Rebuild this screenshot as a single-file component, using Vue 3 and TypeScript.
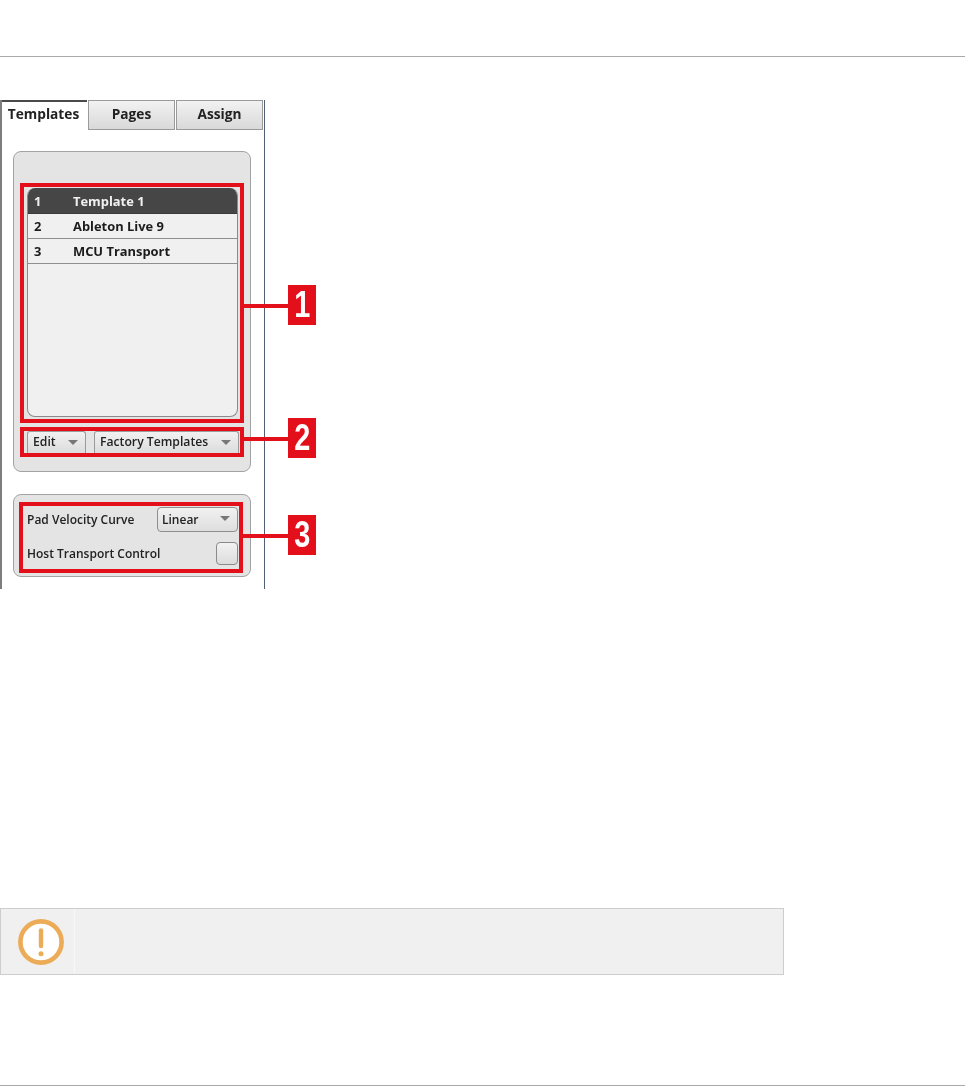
<script setup lang="ts">
const rows = [
  { n: '1', name: 'Template 1', on: true },
  { n: '2', name: 'Ableton Live 9', on: false },
  { n: '3', name: 'MCU Transport', on: false },
];
const tabs = ['Pages', 'Assign'];
</script>

<template>
  <div class="page">
    <header class="top-rule"></header>

    <section class="panel">
      <nav class="tabs">
        <div class="tab active">Templates</div>
        <div v-for="t in tabs" :key="t" class="tab">{{ t }}</div>
      </nav>

      <div class="group first">
        <div class="mark list-mark">
          <div class="list">
            <div v-for="r in rows" :key="r.n" class="row" :class="{ on: r.on }">
              <span class="num">{{ r.n }}</span>
              <span>{{ r.name }}</span>
            </div>
          </div>
        </div>
        <div class="mark buttons-mark">
          <div class="drop edit">Edit<i class="caret"></i></div>
          <div class="drop factory">Factory Templates<i class="caret"></i></div>
        </div>
      </div>

      <div class="group second">
        <div class="mark settings-mark">
          <div class="setting">
            <span>Pad Velocity Curve</span>
            <div class="select">Linear<i class="caret"></i></div>
          </div>
          <div class="setting">
            <span>Host Transport Control</span>
            <div class="check"></div>
          </div>
        </div>
      </div>

      <div class="callout c1"><div class="badge"><span class="digit">1</span></div></div>
      <div class="callout c2"><div class="badge"><span class="digit">2</span></div></div>
      <div class="callout c3"><div class="badge"><span class="digit">3</span></div></div>
    </section>

    <aside class="notice">
      <div class="notice-icon">
        <svg width="48" height="48" viewBox="0 0 48 48">
          <circle cx="24" cy="24" r="20.6" fill="#fff" stroke="#ecab56" stroke-width="4.6" />
          <path d="M24 12.5V28" stroke="#ecab56" stroke-width="4.4" stroke-linecap="round" fill="none" />
          <circle cx="24" cy="35.8" r="2.5" fill="#ecab56" />
        </svg>
      </div>
    </aside>

    <footer class="bottom-rule"></footer>
  </div>
</template>

<style>
html, body { margin: 0; background: #fff; }
</style>

<style scoped>
.page {
  position: relative;
  width: 965px;
  height: 1086px;
  overflow: hidden;
  background: #fff;
  font-family: "Open Sans", "Noto Sans", sans-serif;
  font-weight: 600;
  font-size: 12px;
  color: #222;
}
.top-rule {
  height: 56px;
  border-bottom: 1px solid #a9a9a9;
}
.panel {
  position: relative;
  box-sizing: border-box;
  width: 265px;
  height: 489px;
  margin-top: 43px;
  border-left: 2px solid #7d7d7d;
  border-right: 1px solid #4f5f75;
  filter: blur(0.3px);
}
.tabs {
  display: flex;
  height: 30px;
}
.tab {
  box-sizing: border-box;
  width: 87px;
  margin-right: 1px;
  border: 1px solid #9a9a9a;
  background: linear-gradient(#f2f2f2, #d9d9d9);
  text-align: center;
  font-size: 13.7px;
  font-weight: 700;
  line-height: 26px;
}
.tab:last-child { margin-right: 0; }
.tab.active {
  width: 85px;
  margin-right: 1px;
  padding-right: 2px;
  border: 0;
  border-top: 2px solid #4a4a4a;
  background: #fff;
  line-height: 24px;
}
.group {
  box-sizing: border-box;
  width: 238px;
  margin-left: 11px;
  background: #e4e4e4;
  border: 1px solid #a3a3a3;
  border-radius: 8px;
}
.first {
  height: 321px;
  margin-top: 21px;
  padding: 31px 6px 0 6px;
}
.second {
  height: 83px;
  margin-top: 22px;
  padding: 7px 7px 0 5px;
}
.mark {
  box-sizing: border-box;
  border: 4px solid #e30f1b;
}
.list-mark {
  height: 240px;
  padding: 1px 2px 0 3px;
}
.list {
  box-sizing: border-box;
  height: 229px;
  background: #f0f0f0;
  border: 1px solid #8a8a8a;
  border-top: 0;
  border-radius: 8px;
  overflow: hidden;
}
.row {
  display: flex;
  align-items: center;
  box-sizing: border-box;
  height: 25px;
  padding-left: 6px;
  border-bottom: 1px solid #8f8f8f;
  font-size: 12.9px;
  font-weight: 700;
  color: #1c1c1c;
}
.row.on {
  height: 26px;
  background: #464646;
  color: #f0f0f0;
  border-bottom-color: #3a3a3a;
}
.num { width: 39px; }
.buttons-mark {
  display: flex;
  gap: 8px;
  height: 30px;
  margin-top: 4px;
  padding: 0 1px 0 3px;
}
.drop {
  position: relative;
  box-sizing: border-box;
  height: 22px;
  padding-left: 5px;
  border: 1px solid #9a9a9a;
  border-bottom: 0;
  border-radius: 3px 3px 0 0;
  background: linear-gradient(#f1f1f1, #dcdcdc);
  font-size: 12.2px;
  line-height: 20px;
}
.edit { width: 59px; }
.factory { width: 145px; }
.caret {
  position: absolute;
  right: 7px;
  top: 8px;
  border-left: 5px solid transparent;
  border-right: 5px solid transparent;
  border-top: 5px solid #777;
}
.settings-mark {
  height: 71px;
  padding: 1px 1px 0 4px;
}
.setting {
  display: flex;
  align-items: center;
  justify-content: space-between;
  height: 25px;
}
.setting + .setting {
  height: 23px;
  margin-top: 10px;
}
.select {
  position: relative;
  box-sizing: border-box;
  width: 81px;
  height: 25px;
  padding-left: 4px;
  border: 1px solid #8f8f8f;
  border-radius: 4px;
  background: linear-gradient(#f1f1f1, #dedede);
  line-height: 23px;
}
.check {
  box-sizing: border-box;
  width: 22px;
  height: 23px;
  border: 1px solid #8a8a8a;
  border-radius: 4px;
  background: linear-gradient(#f2f2f2, #dcdcdc);
}
.callout {
  position: absolute;
  left: 241px;
  width: 45px;
  height: 4px;
  background: #e30f1b;
}
.badge {
  position: absolute;
  left: 45px;
  top: -19px;
  display: flex;
  align-items: center;
  justify-content: center;
  width: 28px;
  height: 40px;
  background: #e30f1b;
}
.digit {
  display: block;
  color: #fff;
  font-family: "Liberation Sans", sans-serif;
  font-weight: 700;
  font-size: 37px;
  line-height: 40px;
  transform: scale(0.78, 1.02);
}
.c1 { top: 204px; }
.c2 { top: 337px; }
.c3 { top: 434px; }
.notice {
  display: flex;
  box-sizing: border-box;
  width: 784px;
  height: 67px;
  margin-top: 319px;
  border: 1px solid #cdcdcd;
  background: #f0f0f0;
}
.notice-icon {
  display: flex;
  align-items: center;
  justify-content: center;
  box-sizing: border-box;
  width: 74px;
  padding-left: 7px;
  border-right: 1px solid #f8f8f8;
}
.bottom-rule {
  position: absolute;
  left: 0;
  right: 0;
  top: 1085px;
  height: 1px;
  background: #a9a9a9;
}
</style>
